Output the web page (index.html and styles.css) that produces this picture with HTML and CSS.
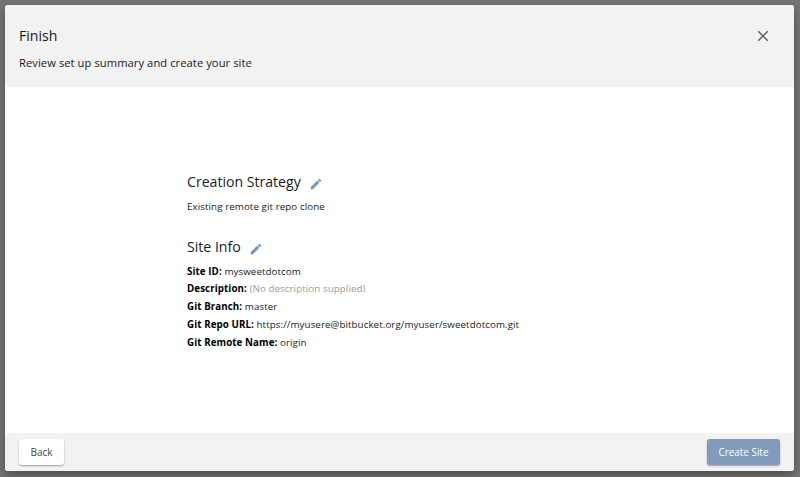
FILE: index.html
```html
<!DOCTYPE html>
<html lang="en">
<head>
<meta charset="utf-8">
<title>Create Site</title>
<link rel="stylesheet" href="styles.css">
</head>
<body>
<main class="dialog">
  <header class="dialog-header">
    <div>
      <h1 class="title">Finish</h1>
      <p class="subtitle">Review set up summary and create your site</p>
    </div>
    <button class="close" aria-label="Close"><svg viewBox="0 0 24 24"><path d="M19 6.41L17.59 5 12 10.59 6.41 5 5 6.41 10.59 12 5 17.59 6.41 19 12 13.41 17.59 19 19 17.59 13.41 12z"/></svg></button>
  </header>
  <div class="dialog-body">
    <section class="section">
      <h2 class="section-title"><span>Creation Strategy</span><svg class="edit" viewBox="0 0 24 24"><path d="M3 17.25V21h3.75L17.81 9.94l-3.75-3.75L3 17.25zM20.71 7.04a1 1 0 0 0 0-1.41l-2.34-2.34a1 1 0 0 0-1.41 0l-1.83 1.83 3.75 3.75 1.83-1.83z"/></svg></h2>
      <p class="row">Existing remote git repo clone</p>
    </section>
    <section class="section">
      <h2 class="section-title"><span>Site Info</span><svg class="edit" viewBox="0 0 24 24"><path d="M3 17.25V21h3.75L17.81 9.94l-3.75-3.75L3 17.25zM20.71 7.04a1 1 0 0 0 0-1.41l-2.34-2.34a1 1 0 0 0-1.41 0l-1.83 1.83 3.75 3.75 1.83-1.83z"/></svg></h2>
      <p class="row"><b>Site ID:</b> mysweetdotcom</p>
      <p class="row"><b>Description:</b> <span class="muted">(No description supplied)</span></p>
      <p class="row"><b>Git Branch:</b> master</p>
      <p class="row"><b>Git Repo URL:</b> https://myusere@bitbucket.org/myuser/sweetdotcom.git</p>
      <p class="row"><b>Git Remote Name:</b> origin</p>
    </section>
  </div>
  <footer class="dialog-footer">
    <button class="btn">Back</button>
    <button class="btn primary">Create Site</button>
  </footer>
</main>
</body>
</html>
```
FILE: styles.css
```css
* { box-sizing: border-box; }
body {
  margin: 0;
  height: 477px;
  padding: 5px 6px 6px 5px;
  background: #757575;
  font-family: "Open Sans", sans-serif;
  color: #1a1a1a;
  overflow: hidden;
}
h1, h2, p { margin: 0; font-weight: 400; }
.dialog {
  height: 466px;
  display: flex;
  flex-direction: column;
  background: #fff;
  border-radius: 3px;
  overflow: hidden;
  box-shadow: 0 4px 10px rgba(0, 0, 0, .35);
}
.dialog-header {
  height: 82px;
  padding: 20px 22px 0 14px;
  display: flex;
  justify-content: space-between;
  background: #f2f2f2;
}
.title { font-size: 14.1px; line-height: 22px; }
.subtitle { margin-top: 6px; font-size: 11.2px; line-height: 20px; letter-spacing: .06px; }
.close { width: 18px; height: 18px; margin-top: 2px; padding: 0; border: 0; background: none; }
.close svg { display: block; width: 18px; height: 18px; fill: #616161; }
.dialog-body { flex: 1; padding: 82px 182px 0; }
.section { margin-bottom: 18px; }
.section-title { display: flex; align-items: center; height: 27px; margin-bottom: 2px; font-size: 14.1px; }
.section-title span { padding-bottom: 2px; }
.edit { width: 14px; height: 14px; margin: 3px 0 0 8px; fill: #7798bd; }
.row { font-size: 9.75px; line-height: 17.7px; letter-spacing: .085px; white-space: nowrap; }
.row b { color: #000; }
.muted { color: #9b9b9b; }
.dialog-footer {
  height: 38px;
  padding: 0 14px;
  display: flex;
  align-items: center;
  justify-content: space-between;
  background: #f2f2f2;
}
.btn {
  height: 26px;
  width: 45px;
  padding: 0;
  border: 0;
  border-radius: 3px;
  background: #fff;
  color: #444;
  font: 400 10px "Open Sans", sans-serif;
  box-shadow: 0 1px 2px rgba(0, 0, 0, .35);
}
.primary { width: 73px; background: #819cba; color: #fff; font-weight: 500; font-size: 9.9px; }
```
